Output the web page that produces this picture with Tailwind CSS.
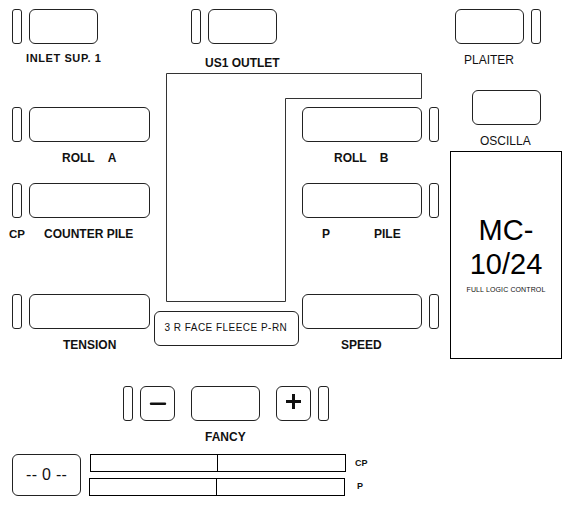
<!DOCTYPE html>
<html lang="en">
<head>
<meta charset="utf-8">
<title>MC-10/24 Full Logic Control</title>
<script src="https://cdn.jsdelivr.net/npm/@tailwindcss/browser@4"></script>
</head>
<body class="bg-white">
<main class="flex h-[506px] w-[567px] overflow-hidden bg-white font-['Liberation_Sans',Arial,sans-serif] text-[12px] leading-[14px] text-[#111] whitespace-nowrap">

  <div class="flex w-[450px] flex-none flex-col">
    <!-- Inlet and outlet -->
    <div class="flex h-[73px] flex-none pt-[9px] pl-3">
      <section class="w-[179px] flex-none">
        <div class="flex gap-[7px]">
          <div class="h-[35px] w-[10px] rounded-[3px] border border-[#222]"></div>
          <div class="h-[35px] w-[69px] rounded-[6px] border border-[#222]"></div>
        </div>
        <h2 class="mt-[7px] pl-[14px] text-[11px] font-bold tracking-[0.6px]">INLET SUP. 1</h2>
      </section>
      <section>
        <div class="flex gap-[7px]">
          <div class="h-[35px] w-[10px] rounded-[3px] border border-[#222]"></div>
          <div class="h-[35px] w-[69px] rounded-[6px] border border-[#222]"></div>
        </div>
        <h2 class="mt-3 pl-[14px] font-bold">US1 OUTLET</h2>
      </section>
    </div>

    <!-- Rolls, piles, tension and speed around the fabric path -->
    <div class="grid h-[313px] flex-none grid-cols-[154px_148px_148px]">
      <div class="flex flex-col pt-[34px] pl-3">
        <section>
          <div class="flex gap-[7px]">
            <div class="h-[35px] w-[10px] rounded-[3px] border border-[#222]"></div>
            <div class="h-[35px] w-[121px] rounded-[6px] border border-[#222]"></div>
          </div>
          <h2 class="mt-[9px] flex gap-[13px] pl-[50px] font-bold"><span>ROLL</span><span>A</span></h2>
        </section>
        <section class="mt-[18px]">
          <div class="flex gap-[7px]">
            <div class="h-[35px] w-[10px] rounded-[3px] border border-[#222]"></div>
            <div class="h-[35px] w-[121px] rounded-[6px] border border-[#222]"></div>
          </div>
          <h2 class="mt-[9px] -ml-[3px] flex font-bold"><span class="w-[35px] text-[11.5px]">CP</span><span>COUNTER PILE</span></h2>
        </section>
        <section class="mt-[53px]">
          <div class="flex gap-[7px]">
            <div class="h-[35px] w-[10px] rounded-[3px] border border-[#222]"></div>
            <div class="h-[35px] w-[121px] rounded-[6px] border border-[#222]"></div>
          </div>
          <h2 class="mt-[9px] pl-[51px] font-bold">TENSION</h2>
        </section>
      </div>

      <div class="flex flex-col">
        <svg class="ml-3 h-[229px] w-[256px] flex-none" viewBox="0 0 256 229" fill="none" stroke="#333" stroke-width="1"><path d="M.5 .5H255.500V25.500H119.500V228.500H.5Z"/></svg>
        <div class="mt-[9px] h-[35px] w-[145px] rounded-[6px] border border-[#222] pt-[9px] pl-[9.500px] text-[10px] tracking-[0.47px]">3 R FACE FLEECE P-RN</div>
      </div>

      <div class="flex flex-col pt-[34px]">
        <section>
          <div class="flex gap-[7px]">
            <div class="h-[35px] w-[120px] rounded-[6px] border border-[#222]"></div>
            <div class="h-[35px] w-[10px] rounded-[3px] border border-[#222]"></div>
          </div>
          <h2 class="mt-[9px] flex gap-[13px] pl-8 font-bold"><span>ROLL</span><span>B</span></h2>
        </section>
        <section class="mt-[18px]">
          <div class="flex gap-[7px]">
            <div class="h-[35px] w-[120px] rounded-[6px] border border-[#222]"></div>
            <div class="h-[35px] w-[10px] rounded-[3px] border border-[#222]"></div>
          </div>
          <h2 class="mt-[9px] flex pl-5 font-bold"><span class="w-[52px]">P</span><span>PILE</span></h2>
        </section>
        <section class="mt-[53px]">
          <div class="flex gap-[7px]">
            <div class="h-[35px] w-[120px] rounded-[6px] border border-[#222]"></div>
            <div class="h-[35px] w-[10px] rounded-[3px] border border-[#222]"></div>
          </div>
          <h2 class="mt-[9px] pl-[39px] font-bold">SPEED</h2>
        </section>
      </div>
    </div>

    <!-- Fancy adjustment -->
    <section class="h-[68px] flex-none pl-[123px]">
      <div class="flex">
        <div class="h-[35px] w-[10px] rounded-[3px] border border-[#222]"></div>
        <button class="ml-[7px] flex h-[35px] w-[35px] items-center justify-center rounded-[6px] border border-[#222]" aria-label="Decrease">
          <svg class="h-[19px] w-[19px]" viewBox="0 0 19 19" stroke="#111" stroke-width="2.400" stroke-linecap="round"><path d="M3 9.800H17"/></svg>
        </button>
        <div class="ml-4 h-[35px] w-[69px] rounded-[6px] border border-[#222]"></div>
        <button class="ml-4 flex h-[35px] w-[35px] items-center justify-center rounded-[6px] border border-[#222]" aria-label="Increase">
          <svg class="h-[19px] w-[19px]" viewBox="0 0 19 19" stroke="#111" stroke-width="3"><path d="M2 7.500H17M9.500 0V15"/></svg>
        </button>
        <div class="ml-[7px] h-[35px] w-[11px] rounded-[3px] border border-[#222]"></div>
      </div>
      <h2 class="mt-[9px] pl-[82px] font-bold">FANCY</h2>
    </section>

    <!-- Counter and level bars -->
    <section class="flex pl-3">
      <div class="h-[42px] w-[69px] flex-none rounded-[6px] border border-[#222] pt-[13px] pl-[13px] text-[16px] tracking-[0.3px]">-- 0 --</div>
      <div class="ml-2 flex flex-col gap-[6px]">
        <div class="flex pl-[1px] text-[9px] font-bold">
          <div class="h-[18px] w-[256px] border border-black"><div class="h-4 w-[127px] border-r border-black"></div></div>
          <span class="pt-[2px] pl-[9px]">CP</span>
        </div>
        <div class="flex text-[9px] font-bold">
          <div class="h-[18px] w-[256px] border border-black"><div class="h-4 w-[127px] border-r border-black"></div></div>
          <span class="pt-[1px] pl-3">P</span>
        </div>
      </div>
    </section>
  </div>

  <!-- Plaiter, oscillator and controller plate -->
  <div class="flex w-[117px] flex-none flex-col pt-[9px]">
    <section class="pl-[5px]">
      <div class="flex gap-[7px]">
        <div class="h-[35px] w-[69px] rounded-[6px] border border-[#222]"></div>
        <div class="h-[35px] w-[10px] rounded-[3px] border border-[#222]"></div>
      </div>
      <h2 class="mt-[9px] pl-[9px]">PLAITER</h2>
    </section>
    <section class="mt-[23px] pl-[22px]">
      <div class="h-[35px] w-[69px] rounded-[6px] border border-[#222]"></div>
      <h2 class="mt-[9px] pl-[8px]">OSCILLA</h2>
    </section>
    <section class="mt-[3px] flex h-[208px] w-[112px] flex-col items-center border border-black pt-[61px] text-center">
      <h1 class="text-[29px] leading-[34px] text-black">MC-<br>10/24</h1>
      <p class="mt-[2px] text-[7px] tracking-[0.12px]">FULL LOGIC CONTROL</p>
    </section>
  </div>
</main>
</body>
</html>
